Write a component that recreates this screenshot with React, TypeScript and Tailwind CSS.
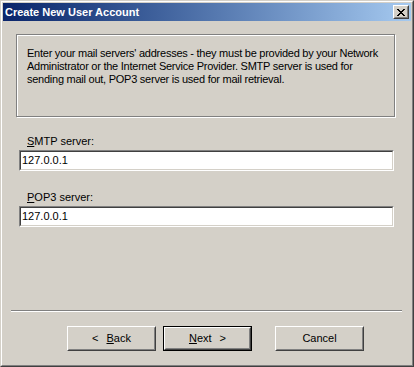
import React from 'react';

const font = { fontFamily: '"Liberation Sans", Arial, sans-serif' };

function Button({ children, isDefault }: { children: React.ReactNode; isDefault?: boolean }) {
  const face = (
    <div className="h-full w-full border border-t-white border-l-white border-r-[#404040] border-b-[#404040]">
      <div className="flex h-full w-full items-center justify-center border border-t-[#d4d0c8] border-l-[#d4d0c8] border-r-[#808080] border-b-[#808080] text-[11px] text-black">
        {children}
      </div>
    </div>
  );
  if (isDefault) {
    return <div className="h-[25px] w-[89px] border border-black">{face}</div>;
  }
  return <div className="h-[25px] w-[89px]">{face}</div>;
}

function Field({ label, hotkey, value }: { label: string; hotkey: string; value: string }) {
  return (
    <div className="flex flex-col">
      <div className="ml-[8px] h-[14px] text-[11px] leading-[14px] text-black">
        <span className="underline">{hotkey}</span>
        {label}
      </div>
      <div className="mt-[2px] h-[21px] w-[375px] border border-t-[#808080] border-l-[#808080] border-r-white border-b-white">
        <div className="flex h-full w-full items-center border border-t-[#404040] border-l-[#404040] border-r-[#d4d0c8] border-b-[#d4d0c8] bg-white pl-[1px] text-[11px] text-black">
          {value}
        </div>
      </div>
    </div>
  );
}

export default function App() {
  return (
    <div style={font} className="h-[367px] w-[414px] border border-t-[#d4d0c8] border-l-[#d4d0c8] border-r-[#404040] border-b-[#404040] bg-[#d4d0c8]">
      <div className="flex h-full w-full flex-col border border-t-white border-l-white border-r-[#808080] border-b-[#808080] p-[1px]">
        {/* title bar */}
        <div className="flex h-[18px] shrink-0 items-center justify-between bg-gradient-to-r from-[#0a246a] to-[#a6caf0] pl-[2px] pr-[2px]">
          <span className="text-[11px] font-bold text-white">Create New User Account</span>
          <div className="h-[14px] w-[16px] border border-t-white border-l-white border-r-[#404040] border-b-[#404040]">
            <div className="flex h-full w-full items-center justify-center border border-t-[#d4d0c8] border-l-[#d4d0c8] border-r-[#808080] border-b-[#808080] bg-[#d4d0c8]">
              <svg width="8" height="7" viewBox="0 0 8 7" shapeRendering="crispEdges">
                <path d="M0 0h2v1H0zM6 0h2v1H6zM1 1h2v1H1zM5 1h2v1H5zM2 2h4v1H2zM3 3h2v1H3zM2 4h4v1H2zM1 5h2v1H1zM5 5h2v1H5zM0 6h2v1H0zM6 6h2v1H6z" fill="#000" />
              </svg>
            </div>
          </div>
        </div>

        {/* info group */}
        <div className="ml-[13px] mt-[13px] h-[83px] w-[379px] whitespace-nowrap border border-[#808080] shadow-[inset_1px_1px_0_#fff,1px_1px_0_#fff] pl-[10px] pt-[12px] text-[11px] leading-[13px] tracking-[-0.25px] text-black">
          Enter your mail servers' addresses - they must be provided by your Network
          <br />
          Administrator or the Internet Service Provider. SMTP server is used for
          <br />
          sending mail out, POP3 server is used for mail retrieval.
        </div>

        {/* fields */}
        <div className="ml-[16px] mt-[17px] flex flex-col gap-[19px]">
          <Field hotkey="S" label="MTP server:" value="127.0.0.1" />
          <Field hotkey="P" label="OP3 server:" value="127.0.0.1" />
        </div>

        {/* separator */}
        <div className="ml-[8px] mt-[83px] h-[2px] w-[391px] border-t border-t-[#808080] border-b border-b-white" />

        {/* buttons */}
        <div className="ml-[64px] mt-[14px] flex">
          <Button>
            <span className="mr-[8px]">&lt;</span>
            <span className="underline">B</span>ack
          </Button>
          <div className="ml-[7px]">
            <Button isDefault>
              <span className="underline">N</span>ext
              <span className="ml-[8px]">&gt;</span>
            </Button>
          </div>
          <div className="ml-[23px]">
            <Button>Cancel</Button>
          </div>
        </div>
      </div>
    </div>
  );
}
